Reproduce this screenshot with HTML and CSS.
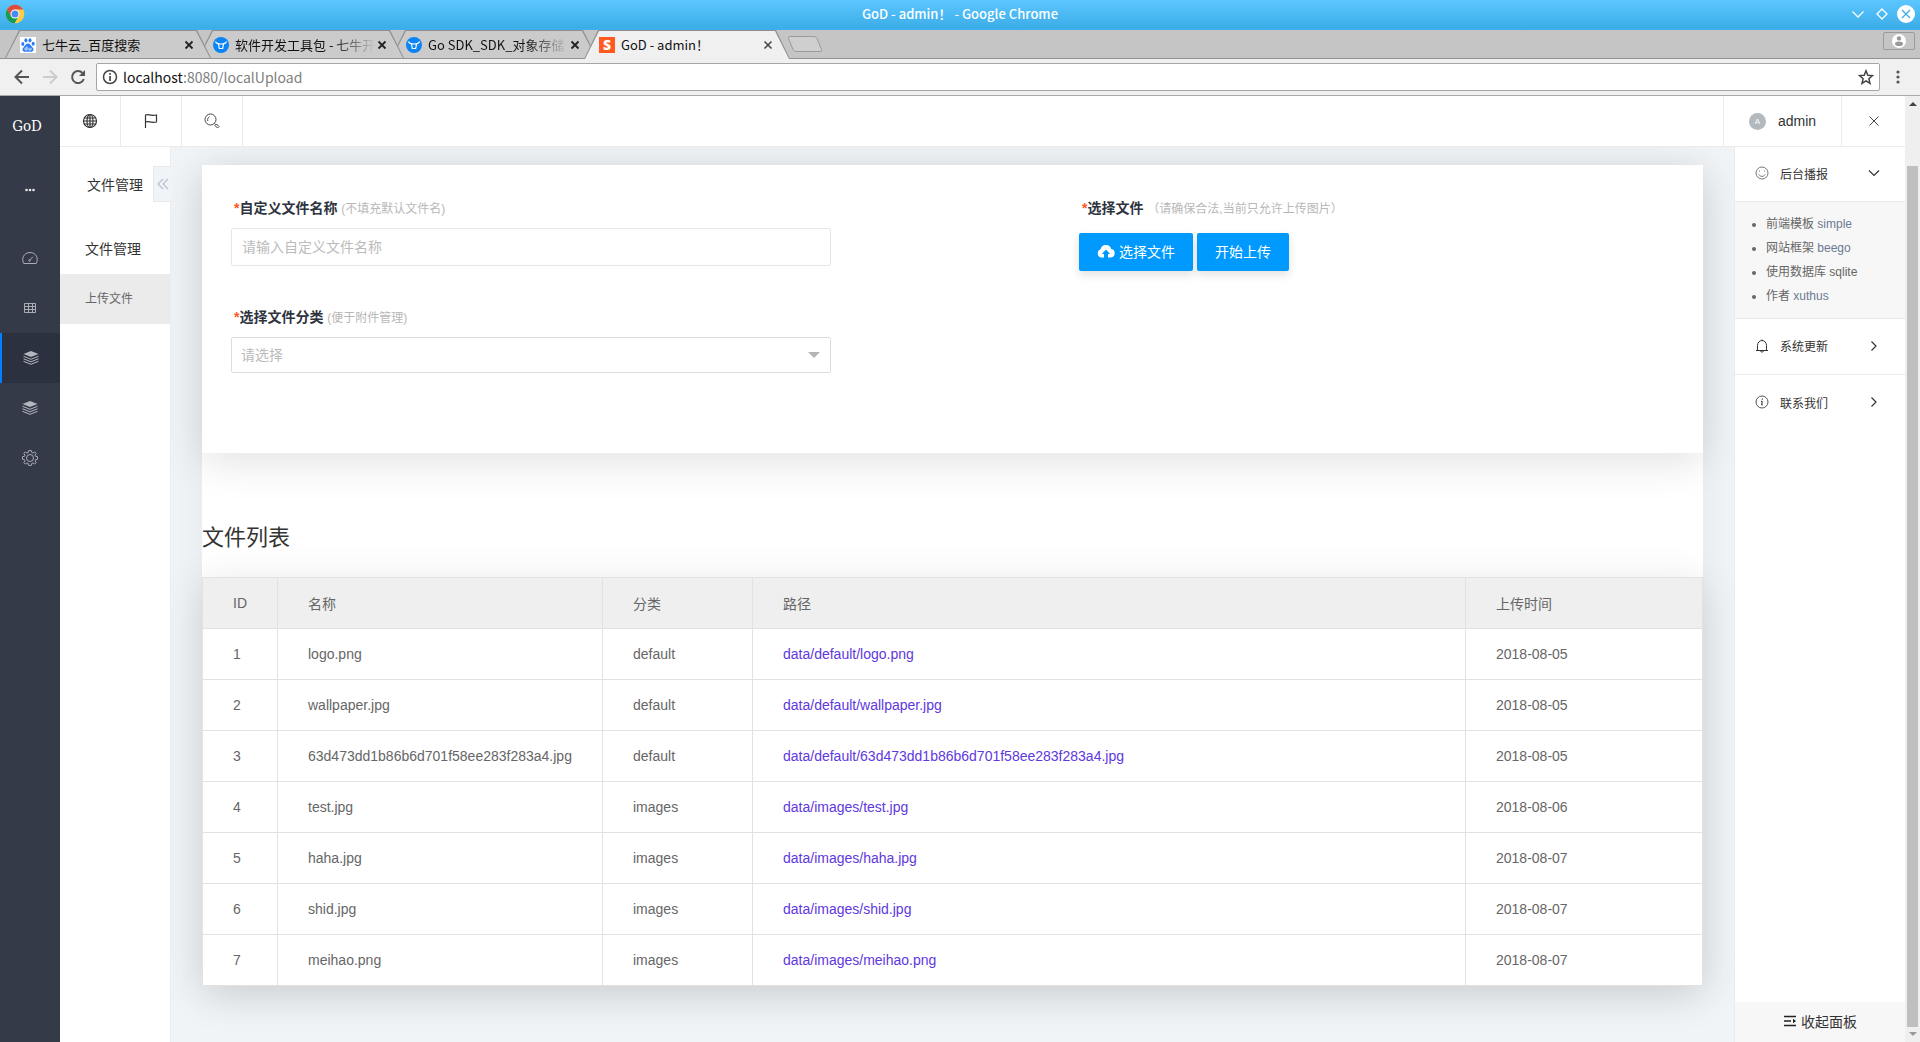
FILE: index.html
```html
<!DOCTYPE html>
<html lang="zh-CN">
<head>
<meta charset="utf-8">
<title>GoD - admin!</title>
<link rel="stylesheet" href="styles.css">
</head>
<body>
<header class="browser">
  <div class="titlebar">
    <svg class="chrome-logo" viewBox="0 0 20 20" width="20" height="20"><circle cx="10" cy="10" r="9.3" fill="#ffcd40"/><path d="M10 10L5.8 12.4 2 5.3A9.3 9.3 0 0 1 18 5.400H10z" fill="#dd4b3e"/><path d="M2 5.300A9.300 9.300 0 0 0 9.600 19.300L13.700 12.200 10 10 5.900 12z" fill="#159d58"/><circle cx="10" cy="10" r="4.500" fill="#fff"/><circle cx="10" cy="10" r="3.500" fill="#4a8af4"/></svg>
    <span class="window-title">GoD - admin！ - Google Chrome</span>
    <div class="window-buttons">
      <button aria-label="Minimize"><svg viewBox="0 0 18 18" width="18" height="18" fill="none" stroke="#fff" stroke-width="1.3"><path d="M3.500 6.500L9 12l5.500-5.500"/></svg></button>
      <button aria-label="Maximize"><svg viewBox="0 0 18 18" width="18" height="18" fill="none" stroke="#fff" stroke-width="1.300"><path d="M9 4l5 5-5 5-5-5z"/></svg></button>
      <button aria-label="Close"><svg viewBox="0 0 18 18" width="18" height="18"><circle cx="9" cy="9" r="9" fill="#fff"/><path d="M5 5l8 8M13 5l-8 8" stroke="#3daee9" stroke-width="1.300"/></svg></button>
    </div>
  </div>
  <div class="tabstrip">
    <div class="tab tab-first"><div class="tab-face">
      <svg class="favicon" viewBox="0 0 16 16" width="16" height="16"><path d="M0 0h16v16H0z" fill="#fff"/><g fill="#2b7df7"><ellipse cx="2.800" cy="7" rx="1.500" ry="2"/><ellipse cx="5.900" cy="3.300" rx="1.500" ry="2.100"/><ellipse cx="10" cy="3.300" rx="1.500" ry="2.100"/><ellipse cx="13.200" cy="6.800" rx="1.500" ry="2"/><path d="M8 6.500c2 0 2.400 1.700 4 3.200 2.600 2.400 1.400 5-.9 5-1.200 0-1.900-.3-3.100-.3s-1.900.3-3.100.3c-2.300 0-3.500-2.600-.9-5C5.600 8.200 6 6.500 8 6.500z"/></g><path d="M7 9.500v3.500H5.500c-1 0-1-2 0-2H7M9 10.800v2.200h2v-2.200" fill="none" stroke="#fff" stroke-width=".8"/></svg>
      <span class="tab-title">七牛云_百度搜索</span>
      <button class="tab-close" aria-label="Close tab"><svg viewBox="0 0 10 10" width="10" height="10"><path d="M1.500 1.500l7 7M8.500 1.500l-7 7" stroke="#222" stroke-width="1.800"/></svg></button>
    </div></div>
    <div class="tab tab-second"><div class="tab-face">
      <svg class="favicon" viewBox="0 0 16 16" width="16" height="16"><circle cx="8" cy="8" r="8" fill="#0b84f5"/><path d="M2.500 4.500c.6 2 2 2.500 5.500 2.500s4.900-.5 5.500-2.500M5.500 7l.8 4.500h3.400l.8-4.500" fill="none" stroke="#fff" stroke-width="1.200"/></svg>
      <span class="tab-title tab-fade">软件开发工具包 - 七牛开</span>
      <button class="tab-close" aria-label="Close tab"><svg viewBox="0 0 10 10" width="10" height="10"><path d="M1.500 1.500l7 7M8.500 1.500l-7 7" stroke="#222" stroke-width="1.800"/></svg></button>
    </div></div>
    <div class="tab"><div class="tab-face">
      <svg class="favicon" viewBox="0 0 16 16" width="16" height="16"><circle cx="8" cy="8" r="8" fill="#0b84f5"/><path d="M2.500 4.500c.6 2 2 2.500 5.500 2.500s4.900-.5 5.500-2.500M5.500 7l.8 4.500h3.400l.8-4.500" fill="none" stroke="#fff" stroke-width="1.200"/></svg>
      <span class="tab-title tab-fade">Go SDK_SDK_对象存储</span>
      <button class="tab-close" aria-label="Close tab"><svg viewBox="0 0 10 10" width="10" height="10"><path d="M1.500 1.500l7 7M8.500 1.500l-7 7" stroke="#222" stroke-width="1.800"/></svg></button>
    </div></div>
    <div class="tab tab-active"><div class="tab-face">
      <span class="favicon favicon-s">S</span>
      <span class="tab-title">GoD - admin！</span>
      <button class="tab-close" aria-label="Close tab"><svg viewBox="0 0 10 10" width="10" height="10"><path d="M1.500 1.500l7 7M8.500 1.500l-7 7" stroke="#444" stroke-width="1.500"/></svg></button>
    </div></div>
    <button class="new-tab" aria-label="New tab"><svg viewBox="0 0 36 18" width="36" height="18"><path d="M3 1.500h24q2 0 3 2l4.500 11q.8 2-1.500 2H9q-2 0-3-2l-4.500-11q-.5-2 1.500-2z" fill="#cfcfcf" stroke="#9a9a9a"/></svg></button>
    <button class="profile" aria-label="Profile"><svg viewBox="0 0 14 14" width="14" height="14"><circle cx="7" cy="7" r="7" fill="#fff"/><circle cx="7" cy="4.400" r="2.200" fill="#999"/><ellipse cx="7" cy="9.700" rx="4" ry="2.300" fill="#999"/></svg></button>
  </div>
  <div class="toolbar">
    <div class="nav-buttons">
      <button aria-label="Back"><svg viewBox="0 0 16 16" width="16" height="16" fill="none" stroke="#555" stroke-width="2"><path d="M15 8H2M8 1.500L1.500 8 8 14.500"/></svg></button>
      <button aria-label="Forward"><svg viewBox="0 0 16 16" width="16" height="16" fill="none" stroke="#ccc" stroke-width="2"><path d="M1 8h13M8 1.500L14.500 8 8 14.500"/></svg></button>
      <button aria-label="Reload"><svg viewBox="0 0 16 16" width="16" height="16"><path d="M13.800 10A6 6 0 1 1 12.500 4" fill="none" stroke="#555" stroke-width="2"/><path d="M15 1v6H9z" fill="#555"/></svg></button>
    </div>
    <div class="omnibox">
      <svg viewBox="0 0 16 16" width="16" height="16"><circle cx="8" cy="8" r="6.500" fill="none" stroke="#444" stroke-width="1.500"/><path d="M7.200 7h1.700v5H7.200zM7.200 4h1.700v1.700H7.200z" fill="#444"/></svg>
      <span class="url">localhost<span class="url-path">:8080/localUpload</span></span>
      <svg viewBox="0 0 16 16" width="16" height="16"><path d="M8 1.800l1.800 4.400 4.700.4-3.600 3.100 1.100 4.700L8 11.900l-4 2.500 1.100-4.700L1.500 6.600l4.700-.4z" fill="none" stroke="#444" stroke-width="1.500"/></svg>
    </div>
    <button class="menu" aria-label="Menu"><svg viewBox="0 0 4 14" width="4" height="14" fill="#555"><circle cx="2" cy="2" r="1.600"/><circle cx="2" cy="7" r="1.600"/><circle cx="2" cy="12" r="1.600"/></svg></button>
  </div>
</header>

<div class="viewport">
  <nav class="rail">
    <a class="brand" href="#">GoD</a>
    <a class="rail-more" href="#" aria-label="More"><svg viewBox="0 0 10 4" width="10" height="4" fill="#e8e8e8"><circle cx="1.500" cy="2" r="1.300"/><circle cx="5" cy="2" r="1.300"/><circle cx="8.500" cy="2" r="1.300"/></svg></a>
    <a class="rail-item" href="#" aria-label="Dashboard"><svg viewBox="0 0 16 16" width="16" height="16" fill="none" stroke="#a9adb5"><path d="M1.800 13.500h12.400C17 8.500 14 2.500 8 2.500S-1 8.500 1.800 13.500zM8.200 9.800l2.600-3"/><circle cx="7.500" cy="10.500" r=".8"/></svg></a>
    <a class="rail-item" href="#" aria-label="Tables"><svg viewBox="0 0 16 16" width="16" height="16" fill="none" stroke="#a9adb5"><path d="M2.500 3.500h11v9h-11zM2.500 6.500h11M2.500 9.500h11M6.500 3.500v9M10.500 3.500v9"/></svg></a>
    <a class="rail-item rail-active" href="#" aria-label="Files"><svg viewBox="0 0 16 16" width="16" height="16"><path d="M8 1l7.500 3L8 7 .5 4z" fill="#b4b7bf"/><path d="M.5 6.300L8 9.300l7.500-3M.5 8.800l7.500 3 7.500-3M.5 11.300l7.500 3 7.500-3" fill="none" stroke="#b4b7bf"/></svg></a>
    <a class="rail-item" href="#" aria-label="Layers"><svg viewBox="0 0 16 16" width="16" height="16"><path d="M8 1l7.500 3L8 7 .5 4z" fill="#b4b7bf"/><path d="M.5 6.300L8 9.300l7.500-3M.5 8.800l7.500 3 7.500-3M.5 11.300l7.500 3 7.500-3" fill="none" stroke="#b4b7bf"/></svg></a>
    <a class="rail-item" href="#" aria-label="Settings"><svg viewBox="0 0 16 16" width="16" height="16" fill="none" stroke="#a9adb5"><circle cx="8" cy="8" r="3.500"/><path d="M6.600.6h2.800l.4 2 1.200.5 1.700-1.200 1.500 1.500L13 5.100l.5 1.200 2 .4v2.600l-2 .4-.5 1.200 1.200 1.700-1.500 1.500-1.700-1.200-1.200.5-.4 2H6.600l-.4-2L5 12.900l-1.700 1.200-1.500-1.500L3 10.900l-.5-1.200-2-.4V6.700l2-.4L3 5.100 1.800 3.400l1.500-1.500L5 3.100l1.200-.5z"/></svg></a>
  </nav>

  <div class="app">
    <header class="topbar">
      <button class="top-cell" aria-label="Language"><svg viewBox="0 0 16 16" width="16" height="16" fill="none" stroke="#333" stroke-width="1.200"><circle cx="8" cy="8" r="6.500"/><ellipse cx="8" cy="8" rx="3" ry="6.500"/><path d="M8 1.500v13M1.500 8h13M2.500 5h11M2.500 11h11"/></svg></button>
      <button class="top-cell" aria-label="Flag"><svg viewBox="0 0 16 16" width="16" height="16" fill="none" stroke="#333" stroke-width="1.200"><path d="M2.500 15V2c3-1.500 4.500 1.500 11 0v7c-6 1.500-7.500-1.500-11 0"/></svg></button>
      <button class="top-cell" aria-label="Search"><svg viewBox="0 0 16 16" width="16" height="16" fill="none" stroke="#444"><circle cx="6.500" cy="6.500" r="5.500"/><path d="M3.800 8c-.6-2 .4-3.700 1.700-4.200M10.400 10.400l1.300 1.300M11 12.500l1.500-1.500 2.500 2.500-1.500 1.500z"/></svg></button>
      <a class="user" href="#"><span class="avatar">A</span>admin</a>
      <button class="top-exit" aria-label="Exit"><svg viewBox="0 0 10 10" width="10" height="10"><path d="M.5.5l9 9M9.500.5l-9 9" stroke="#444"/></svg></button>
    </header>
    <div class="columns">
      <nav class="submenu">
        <div class="submenu-head"><span>文件管理</span><button class="collapse" aria-label="Collapse"><svg viewBox="0 0 12 12" width="12" height="12" fill="none" stroke="#b6c2d0" stroke-width="1.200"><path d="M6 1L1 6l5 5M11 1L6 6l5 5"/></svg></button></div>
        <h2 class="submenu-title">文件管理</h2>
        <a class="submenu-link" href="#">上传文件</a>
      </nav>
      <main class="main">
        <div class="sheet">
          <form class="card">
            <div class="fields">
              <label class="label" for="name"><span class="req">*</span>自定义文件名称 <small>(不填充默认文件名)</small></label>
              <input class="input" id="name" type="text" placeholder="请输入自定义文件名称">
              <label class="label" for="category"><span class="req">*</span>选择文件分类 <small>(便于附件管理)</small></label>
              <div class="select-box"><select id="category"><option>请选择</option></select></div>
            </div>
            <div class="upload">
              <div class="label"><span class="req">*</span>选择文件 <small>（请确保合法,当前只允许上传图片）</small></div>
              <div class="buttons">
                <button class="btn" type="button"><svg viewBox="0 0 18 14" width="18" height="14"><path d="M4.500 13.500A4.300 4.300 0 0 1 3.500 5.200 5.600 5.600 0 0 1 14.300 5 4.300 4.300 0 0 1 13.500 13.500H11V10h2.200L9 5.500 4.800 10H7v3.500z" fill="#fff"/></svg>选择文件</button>
                <button class="btn" type="button">开始上传</button>
              </div>
            </div>
          </form>
          <h1 class="list-title">文件列表</h1>
          <table class="files">
            <thead><tr><th class="c-id">ID</th><th class="c-name">名称</th><th class="c-kind">分类</th><th>路径</th><th class="c-date">上传时间</th></tr></thead>
            <tbody>
              <tr><td>1</td><td>logo.png</td><td>default</td><td><a href="#">data/default/logo.png</a></td><td>2018-08-05</td></tr>
              <tr><td>2</td><td>wallpaper.jpg</td><td>default</td><td><a href="#">data/default/wallpaper.jpg</a></td><td>2018-08-05</td></tr>
              <tr><td>3</td><td>63d473dd1b86b6d701f58ee283f283a4.jpg</td><td>default</td><td><a href="#">data/default/63d473dd1b86b6d701f58ee283f283a4.jpg</a></td><td>2018-08-05</td></tr>
              <tr><td>4</td><td>test.jpg</td><td>images</td><td><a href="#">data/images/test.jpg</a></td><td>2018-08-06</td></tr>
              <tr><td>5</td><td>haha.jpg</td><td>images</td><td><a href="#">data/images/haha.jpg</a></td><td>2018-08-07</td></tr>
              <tr><td>6</td><td>shid.jpg</td><td>images</td><td><a href="#">data/images/shid.jpg</a></td><td>2018-08-07</td></tr>
              <tr><td>7</td><td>meihao.png</td><td>images</td><td><a href="#">data/images/meihao.png</a></td><td>2018-08-07</td></tr>
            </tbody>
          </table>
        </div>
      </main>
      <aside class="panel">
        <button class="panel-row panel-open"><svg viewBox="0 0 14 14" width="14" height="14" fill="none" stroke="#777"><circle cx="7" cy="7" r="6"/><path d="M4 8.500c1 2.500 5 2.500 6 0M4.500 4.500v1M9.500 4.500v1"/></svg><span>后台播报</span><svg viewBox="0 0 12 12" width="12" height="12" fill="none" stroke="#333" stroke-width="1.200"><path d="M1 3.500l5 5 5-5"/></svg></button>
        <ul class="news">
          <li>前端模板 <a href="#">simple</a></li>
          <li>网站框架 <a href="#">beego</a></li>
          <li>使用数据库 sqlite</li>
          <li>作者 <a href="#">xuthus</a></li>
        </ul>
        <button class="panel-row"><svg viewBox="0 0 14 14" width="14" height="14" fill="none" stroke="#333"><path d="M1 11.500h12M2.500 11.500V6.500a4.500 5 0 0 1 9 0v5M5.500 12c.5 1.500 2.500 1.500 3 0M7 .5v1"/></svg><span>系统更新</span><svg viewBox="0 0 12 12" width="12" height="12" fill="none" stroke="#333" stroke-width="1.200"><path d="M3.500 1.500L8 6l-4.500 4.500"/></svg></button>
        <button class="panel-row panel-last"><svg viewBox="0 0 14 14" width="14" height="14" fill="none" stroke="#555"><circle cx="7" cy="7" r="6"/><path d="M7.500 3.500l-.2 1.200M6 6.300h1.200L6.700 10h1" stroke="#222"/></svg><span>联系我们</span><svg viewBox="0 0 12 12" width="12" height="12" fill="none" stroke="#333" stroke-width="1.200"><path d="M3.500 1.500L8 6l-4.500 4.500"/></svg></button>
        <button class="panel-foot"><svg viewBox="0 0 14 12" width="14" height="12"><path d="M1 1.500h12M1 6h7M1 10.500h12" stroke="#222" stroke-width="1.400"/><path d="M10 3.800L13 6l-3 2.200z" fill="#222"/></svg>收起面板</button>
      </aside>
    </div>
  </div>

  <div class="scrollbar"><span class="arrow-up"></span><span class="track"><span class="thumb"></span></span><span class="arrow-down"></span></div>
</div>
</body>
</html>
```
FILE: styles.css
```css
* { box-sizing: border-box; }
body {
  margin: 0;
  height: 100vh;
  display: flex;
  flex-direction: column;
  font-family: "Liberation Sans", "Noto Sans CJK SC", sans-serif;
  font-size: 14px;
  color: #333;
}
button { padding: 0; border: 0; background: none; font: inherit; color: inherit; }
a { color: inherit; text-decoration: none; }
svg { display: block; flex: none; }

/* browser frame */
.browser { flex: none; font-family: "Noto Sans CJK SC", sans-serif; font-size: 13px; color: #111; }
.titlebar {
  height: 30px;
  display: grid;
  grid-template-columns: 1fr auto 1fr;
  align-items: center;
  padding: 0 5px 2px;
  background: linear-gradient(#5cc6ff, #3daee9 90%);
}
.window-title { color: #fff; font-weight: 500; line-height: 28px; white-space: pre; }
.window-buttons { display: flex; justify-content: flex-end; gap: 6px; }
.tabstrip {
  height: 29px;
  display: flex;
  align-items: flex-end;
  padding-left: 5px;
  background: #c5c5c5;
  border-bottom: 1px solid #929292;
}
.tab {
  width: 206px;
  height: 28px;
  margin-right: -13px;
  padding: 1px 1px 0;
  background: #8f8f8f;
  clip-path: polygon(14px 0, 192px 0, 100% 100%, 0 100%);
}
.tab-first { z-index: 3; }
.tab-second { z-index: 2; }
.tab-face {
  height: 100%;
  display: flex;
  align-items: center;
  padding: 0 16px 0 14px;
  background: #cbcbcb;
  clip-path: polygon(14px 0, 190px 0, 100% 100%, 0 100%);
}
.tab-active { z-index: 4; height: 29px; margin-bottom: -1px; }
.tab-active .tab-face { background: #f0f0f0; }
.favicon { flex: none; width: 16px; height: 16px; margin-right: 6px; }
.favicon-s { background: #ff5a1f; color: #fff; font: 900 14px/16px "Open Sans", sans-serif; text-align: center; }
.tab-title { flex: 1; overflow: hidden; white-space: nowrap; line-height: 20px; }
.tab-fade { mask-image: linear-gradient(90deg, #000 70%, transparent); }
.tab-close { margin-left: 2px; }
.new-tab { align-self: center; margin-left: 10px; }
.profile {
  width: 32px;
  height: 18px;
  margin: 0 5px 8px auto;
  display: flex;
  align-items: center;
  justify-content: center;
  border: 1px solid #9b9b9b;
  border-radius: 2px;
}
.toolbar {
  height: 37px;
  display: flex;
  align-items: center;
  padding: 0 20px 0 14px;
  background: #f0f0f0;
  border-bottom: 1px solid #a9a9a9;
}
.nav-buttons { display: flex; gap: 12px; margin-right: 10px; }
.omnibox {
  flex: 1;
  height: 28px;
  display: flex;
  align-items: center;
  gap: 5px;
  padding: 0 5px;
  background: #fff;
  border: 1px solid #a6a6a6;
  border-radius: 2px;
}
.url { flex: 1; font-size: 14px; line-height: 24px; }
.url-path { color: #808080; }
.menu { margin-left: 16px; }

/* page */
.viewport { flex: 1; min-height: 0; display: flex; }
.rail { flex: none; width: 60px; background: #343a47; color: #fff; }
.rail a { display: flex; align-items: center; justify-content: center; height: 50px; }
.rail .brand { height: 60px; padding-right: 6px; font: 15px "DejaVu Serif Condensed", "DejaVu Serif", serif; }
.rail .rail-more { height: 68px; margin-bottom: 9px; }
.rail .rail-active { background: #2c3140; border-left: 2px solid #0080ff; }
.app { flex: 1; min-width: 0; display: flex; flex-direction: column; }
.topbar { flex: none; height: 51px; display: flex; border-bottom: 1px solid #ebebeb; background: #fff; }
.top-cell { width: 61px; display: flex; align-items: center; justify-content: center; border-right: 1px solid #ebebeb; }
.user {
  width: 118px;
  margin-left: auto;
  display: flex;
  align-items: center;
  justify-content: center;
  gap: 12px;
  border-left: 1px solid #ebebeb;
}
.avatar { width: 17px; border-radius: 50%; background: #b4b9be; color: #fff; font-size: 8px; line-height: 17px; text-align: center; }
.top-exit { width: 64px; display: flex; align-items: center; justify-content: center; border-left: 1px solid #ebebeb; }
.columns { flex: 1; min-height: 0; display: flex; }
.submenu { flex: none; width: 111px; border-right: 1px solid #ebebeb; background: #fff; }
.submenu-head { display: flex; align-items: center; justify-content: space-between; height: 74px; padding-left: 27px; margin-right: -1px; white-space: nowrap; }
.collapse {
  width: 18px;
  height: 36px;
  display: flex;
  align-items: center;
  justify-content: center;
  background: #f0f4f7;
  border: 1px solid #e6eaee;
  border-right: 0;
}
.submenu-title { margin: 0; padding: 3px 0 0 25px; font-size: 14px; font-weight: 400; line-height: 50px; }
.submenu-link { display: block; padding-left: 25px; background: #ebebeb; color: #666; font-size: 12px; line-height: 50px; }
.main { flex: 1; min-width: 0; padding: 18px 31px 0; overflow: hidden; background: #f0f4f7; }
.sheet { background: #fff; box-shadow: 0 8px 40px rgba(0, 0, 0, .05); }
.card, .files { box-shadow: 0 8px 40px rgba(0, 0, 0, .12); }
.card { height: 288px; display: flex; padding: 28px 29px; background: #fff; }
.fields { width: 600px; margin-right: 248px; display: flex; flex-direction: column; }
.label { padding-left: 3px; line-height: 30px; font-weight: 700; color: #2e3340; }
.label small { font-size: 12px; font-weight: 400; color: #b8b8b8; }
.req { color: #ff5722; }
.input, .select-box select {
  width: 100%;
  border: 1px solid #e6e6ec;
  border-radius: 2px;
  background: #fff;
  padding: 0 10px;
  font: inherit;
}
.input { height: 38px; margin: 4px 0 36px; }
.input::placeholder { color: #bbb; }
.select-box { margin-top: 4px; display: grid; align-items: center; }
.select-box select { grid-area: 1 / 1; height: 36px; padding: 0 9px; appearance: none; border-color: #ddd; color: #bbb; }
.select-box::after {
  content: "";
  grid-area: 1 / 1;
  justify-self: end;
  margin-right: 11px;
  border: 6px solid transparent;
  border-top-color: #b5b5b5;
  border-bottom: 0;
  pointer-events: none;
}
.buttons { display: flex; gap: 4px; margin-top: 9px; }
.btn {
  height: 38px;
  display: flex;
  align-items: center;
  gap: 4px;
  padding: 0 18px 2px;
  border-radius: 2px;
  background: #009aff;
  color: #fff;
  box-shadow: 0 4px 10px rgba(0, 0, 0, .12);
}
.list-title { margin: 0; padding: 63px 0 17px; font-size: 22px; font-weight: 400; line-height: 44px; }
.files { width: 100%; table-layout: fixed; border-collapse: collapse; color: #666; background: #fff; }
.files th, .files td { height: 51px; padding: 0 30px; border: 1px solid #e2e2e2; text-align: left; font-weight: 400; }
.files th { background: #efefef; }
.files a { color: #6038e0; }
.c-id { width: 75px; }
.c-name { width: 325px; }
.c-kind { width: 150px; }
.c-date { width: 237px; }
.panel { flex: none; width: 171px; display: flex; flex-direction: column; border-left: 1px solid #ebebeb; font-size: 12px; background: #fff; }
.panel-row { height: 56px; display: flex; align-items: center; gap: 11px; padding: 0 25px 2px 20px; border-bottom: 1px solid #ebebeb; text-align: left; }
.panel-row span { flex: 1; }
.panel-open { height: 55px; }
.panel-last { border-bottom: 0; }
.news { margin: 0; padding: 10px 0 10px 31px; background: #f7f7f7; border-bottom: 1px solid #e8e8f0; color: #666; line-height: 24px; }
.news a { color: #6d7a93; }
.panel-foot { height: 40px; margin-top: auto; padding-bottom: 2px; display: flex; align-items: center; justify-content: center; gap: 4px; background: #f7f7f7; font-size: 14px; }
.scrollbar { flex: none; width: 15px; display: flex; flex-direction: column; align-items: center; padding: 6px 0; background: #efefef; }
.arrow-up { border: 4px solid transparent; border-bottom-color: #444; border-top: 0; }
.arrow-down { border: 4px solid transparent; border-top-color: #999; border-bottom: 0; }
.track { flex: 1; width: 11px; margin: 5px 0; display: flex; align-items: flex-end; }
.thumb { width: 100%; height: 94%; background: #bfbfbf; }
```
